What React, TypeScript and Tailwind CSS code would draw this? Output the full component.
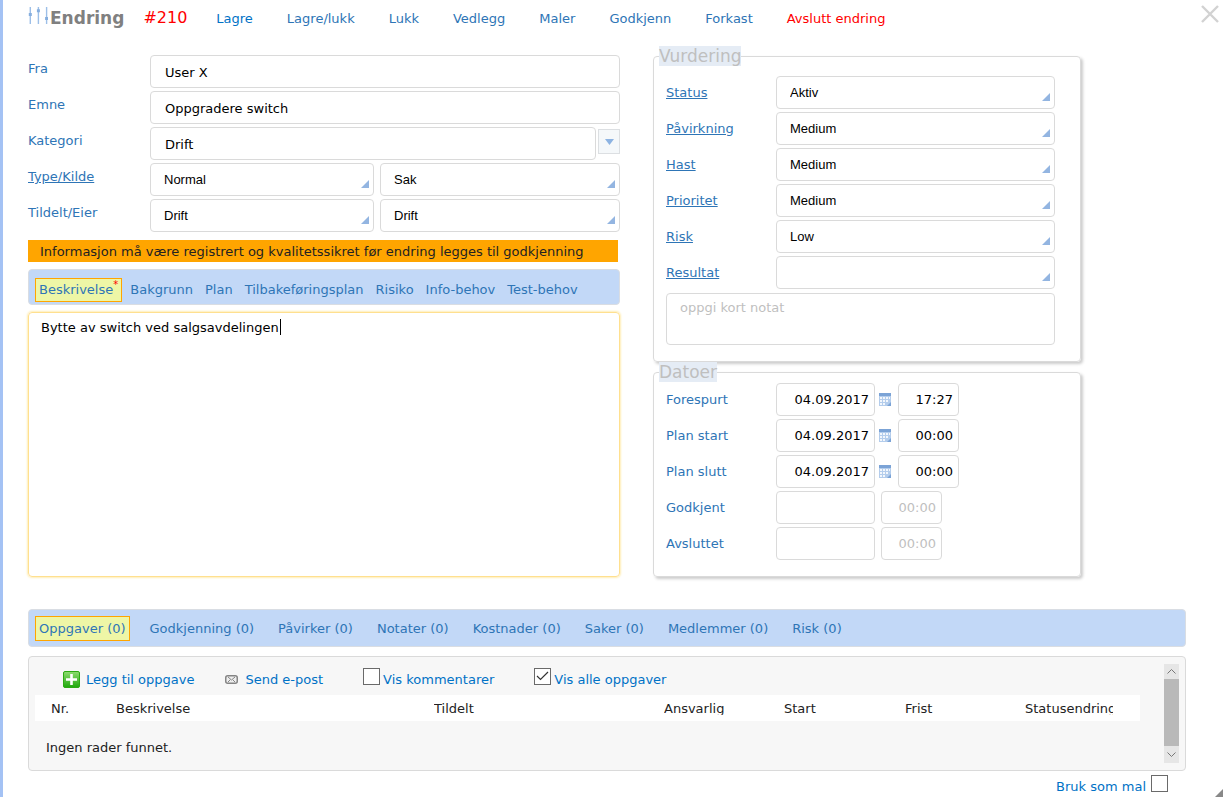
import React from 'react';

const actions = ['Lagre', 'Lagre/lukk', 'Lukk', 'Vedlegg', 'Maler', 'Godkjenn', 'Forkast', 'Avslutt endring'];

const textTabs = ['Beskrivelse', 'Bakgrunn', 'Plan', 'Tilbakeføringsplan', 'Risiko', 'Info-behov', 'Test-behov'];

const relationTabs = ['Oppgaver', 'Godkjenning', 'Påvirker', 'Notater', 'Kostnader', 'Saker', 'Medlemmer', 'Risk'];

const assessments = [
    { id: 'status', label: 'Status', value: 'Aktiv' },
    { id: 'pavirkning', label: 'Påvirkning', value: 'Medium' },
    { id: 'hast', label: 'Hast', value: 'Medium' },
    { id: 'prioritet', label: 'Prioritet', value: 'Medium' },
    { id: 'risk', label: 'Risk', value: 'Low' },
    { id: 'resultat', label: 'Resultat', value: '' },
];

const dates = [
    { id: 'forespurt', label: 'Forespurt', date: '04.09.2017', time: '17:27' },
    { id: 'planstart', label: 'Plan start', date: '04.09.2017', time: '00:00' },
    { id: 'planslutt', label: 'Plan slutt', date: '04.09.2017', time: '00:00' },
    { id: 'godkjent', label: 'Godkjent', date: '', time: '' },
    { id: 'avsluttet', label: 'Avsluttet', date: '', time: '' },
];

const columns = [
    { name: 'Nr.', width: 'w-[65px]' },
    { name: 'Beskrivelse', width: 'w-[318px]' },
    { name: 'Tildelt', width: 'w-[230px]' },
    { name: 'Ansvarlig', width: 'w-[120px]' },
    { name: 'Start', width: 'w-[121px]' },
    { name: 'Frist', width: 'w-[120px]' },
    { name: 'Statusendring', width: 'w-[131px]' },
];

const field = 'h-[33px] rounded-[4px] border border-[#dadada] bg-white text-black outline-none';

const Select = ({ id, value, label }: { id: string; value: string; label?: string }) => (
    <div className="relative min-w-0 w-full">
        <select id={id} aria-label={label} defaultValue={value} className={`${field} block w-full appearance-none pl-[13px] font-['Liberation_Sans',Arial,sans-serif]`}>
            <option value={value}>{value}</option>
        </select>
        <svg className="pointer-events-none absolute right-[5px] bottom-2 size-2" viewBox="0 0 8 8" aria-hidden="true">
            <path d="M8 0v8H0z" fill="#93b5e1" />
        </svg>
    </div>
);

const Checkbox = ({ id, checked = false }: { id: string; checked?: boolean }) => (
    <span className="relative block size-[17px]">
        <input id={id} type="checkbox" defaultChecked={checked} className="peer block size-[17px] appearance-none border border-[#6a6a6a] bg-white" />
        <svg className="pointer-events-none absolute inset-0 hidden size-[17px] peer-checked:block" viewBox="0 0 17 17" fill="none" stroke="#333" strokeWidth="1.2" aria-hidden="true">
            <path d="M3 8l3.5 3.5L14 4" />
        </svg>
    </span>
);

const SlidersIcon = () => (
    <svg className="mt-[7px] h-[18px] w-5 self-start" viewBox="0 0 20 18" fill="none" stroke="#9dbfe8" strokeWidth="1.4" aria-hidden="true">
        <path d="M2.3 0v17M10.4 0v17M18.6 0v17" />
        <path d="M2.3 6v3M10.4 2.3v3M18.6 10v3" stroke="#86aede" strokeWidth="3" />
    </svg>
);

const CalendarIcon = () => (
    <svg className="h-[13px] w-3" viewBox="0 0 12 13" aria-hidden="true">
        <path d="M0 0h12v10l-3 3H0z" fill="#b4cdec" />
        <path d="M0 0h12v3H0z" fill="#7ba3d6" />
        <path d="M1 4h2v2H1zM4 4h2v2H4zM7 4h2v2H7zM10 4h1v2h-1zM1 7h2v2H1zM4 7h2v2H4zM7 7h2v2H7zM1 10h2v2H1zM4 10h2v2H4z" fill="#f3f7fc" />
        <path d="M12 9v4H8z" fill="#7ba3d6" />
    </svg>
);

const PlusIcon = () => (
    <svg className="size-[17px]" viewBox="0 0 17 17" aria-hidden="true">
        <defs>
            <linearGradient id="plus-fill" x1="0" y1="0" x2="0" y2="1">
                <stop offset="0" stopColor="#8fdc70" />
                <stop offset="1" stopColor="#1fa80c" />
            </linearGradient>
        </defs>
        <rect x="0.5" y="0.5" width="16" height="16" rx="1.5" fill="url(#plus-fill)" stroke="#2cab12" />
        <path d="M8.5 3v11M3 8.5h11" stroke="#fff" strokeWidth="2.6" />
    </svg>
);

const MailIcon = () => (
    <svg className="h-[9px] w-[13px]" viewBox="0 0 13 9" fill="none" stroke="#858585" aria-hidden="true">
        <rect x="0.75" y="0.75" width="11.5" height="7.5" rx="2" fill="#eee" strokeWidth="1.5" />
        <path d="M3 2l3.5 3L10 2M3 7l2.3-2.3M10 7L7.7 4.7" />
    </svg>
);

const App: React.FC = () => {
    return (
        <div className="relative min-h-screen border-l-[3px] border-[#a4c2f4] bg-white pr-[37px] pl-[25px] font-['DejaVu_Sans',Verdana,sans-serif] text-[13px] leading-5 text-[#2e75b6]">
            <header className="flex h-9 items-center whitespace-nowrap">
                <SlidersIcon />
                <h1 className="ml-[2px] text-[17px] font-bold text-[#808080]">Endring</h1>
                <span className="ml-[19px] text-base text-[#ff0000]">#210</span>
                <nav className="ml-[29px] flex gap-[34px] pt-[2px]">
                    {actions.map((name) => (
                        <button key={name} type="button" className="first:text-[#0072c6] last:text-[#ff0000]">{name}</button>
                    ))}
                </nav>
            </header>
            <button type="button" aria-label="Lukk vindu" className="absolute top-[5px] right-1">
                <svg className="size-[18px]" viewBox="0 0 18 18" stroke="#d2d2d2" strokeWidth="2.4" aria-hidden="true">
                    <path d="M1 1l16 16M17 1L1 17" />
                </svg>
            </button>

            <main className="pt-[10px]">
                <div className="grid grid-cols-[minmax(0,592fr)_minmax(0,428fr)_minmax(0,72fr)] gap-x-[33px]">
                    <section className="flex flex-col pt-[9px]">
                        <div className="grid grid-cols-[122px_minmax(0,1fr)] gap-y-[3px]">
                            <label htmlFor="fra" className="leading-7">Fra</label>
                            <input id="fra" defaultValue="User X" className={`${field} px-[14px] pt-[2px]`} />
                            <label htmlFor="emne" className="leading-7">Emne</label>
                            <input id="emne" defaultValue="Oppgradere switch" className={`${field} px-[14px] pt-[2px]`} />
                            <label htmlFor="kategori" className="leading-7">Kategori</label>
                            <div className="flex gap-[2px]">
                                <input id="kategori" defaultValue="Drift" className={`${field} min-w-0 flex-1 px-[14px] pt-[2px]`} />
                                <button type="button" aria-label="Velg kategori" className="mt-[2px] flex h-[25px] w-[22px] items-center justify-center border border-[#dcdfe2] bg-[#f5f8fa]">
                                    <svg className="h-[6px] w-[9px]" viewBox="0 0 9 6" aria-hidden="true">
                                        <path d="M0 0h9L4.5 6z" fill="#8db3e2" />
                                    </svg>
                                </button>
                            </div>
                            <label htmlFor="type" className="leading-7 underline">Type/Kilde</label>
                            <div className="grid grid-cols-[minmax(0,224fr)_minmax(0,240fr)] gap-[6px]">
                                <Select id="type" value="Normal" />
                                <Select id="kilde" label="Kilde" value="Sak" />
                            </div>
                            <label htmlFor="tildelt" className="leading-7">Tildelt/Eier</label>
                            <div className="grid grid-cols-[minmax(0,224fr)_minmax(0,240fr)] gap-[6px]">
                                <Select id="tildelt" value="Drift" />
                                <Select id="eier" label="Eier" value="Drift" />
                            </div>
                        </div>

                        <p className="mt-2 mr-[2px] bg-[#ffa500] px-3 pt-px leading-[21px] whitespace-nowrap text-[#222]">
                            Informasjon må være registrert og kvalitetssikret før endring legges til godkjenning
                        </p>

                        <nav className="mt-[7px] flex h-9 items-center gap-1 rounded-[4px] border border-[#d9dde3] bg-[#c2d8f7] pt-[6px] pl-[6px] whitespace-nowrap">
                            {textTabs.map((name, i) => (
                                <button key={name} type="button" className={i === 0 ? 'flex border border-[#ffa500] bg-[#eef6a6] px-[3px] leading-[22px]' : 'px-1 leading-[22px]'}>
                                    {name}
                                    {i === 0 && <span className="text-[10px] leading-3 text-[#ff0000]">*</span>}
                                </button>
                            ))}
                        </nav>

                        <div className="relative mt-[7px] flex flex-1">
                            <textarea aria-label="Beskrivelse" defaultValue="Bytte av switch ved salgsavdelingen" className="w-full resize-none rounded-[4px] border border-[#ffe08f] px-3 pt-[5px] text-black shadow-[0_0_2px_1px_#ffeeb8] outline-none" />
                            <span className="absolute top-[7px] left-[252px] h-4 w-px bg-black" />
                        </div>
                    </section>

                    <div>
                        <fieldset className="rounded-[4px] border border-[#dadada] px-3 pb-4 shadow-[2px_2px_3px_#ccc]">
                            <legend className="-ml-[7px] bg-[#e5ecf5] text-[17px] leading-5 text-[#bfbfbf]">Vurdering</legend>
                            <div className="mr-[13px] grid grid-cols-[110px_minmax(0,1fr)] items-center gap-y-[3px] pt-[10px]">
                                {assessments.map((row) => (
                                    <React.Fragment key={row.id}>
                                        <label htmlFor={row.id} className="underline">{row.label}</label>
                                        <Select id={row.id} value={row.value} />
                                    </React.Fragment>
                                ))}
                                <textarea aria-label="Notat" placeholder="oppgi kort notat" className="col-span-2 mt-px h-[52px] w-full resize-none rounded-[4px] border border-[#dadada] px-[13px] pt-1 outline-none placeholder:text-[#bfbfbf]" />
                            </div>
                        </fieldset>

                        <fieldset className="rounded-[4px] border border-[#dadada] px-3 pb-4 shadow-[2px_2px_3px_#ccc]">
                            <legend className="-ml-[7px] bg-[#e5ecf5] text-[17px] leading-5 text-[#bfbfbf]">Datoer</legend>
                            <div className="flex flex-col gap-[3px] pt-px">
                                {dates.map((row) => (
                                    <div key={row.id} className="flex items-center">
                                        <label htmlFor={row.id} className="w-[110px]">{row.label}</label>
                                        <input id={row.id} defaultValue={row.date} className={`${field} w-[99px] pr-[5px] text-right`} />
                                        {row.date && (
                                            <button type="button" aria-label={`Velg dato, ${row.label}`} className="ml-1 mr-[1px]">
                                                <CalendarIcon />
                                            </button>
                                        )}
                                        <input aria-label={`${row.label} klokkeslett`} defaultValue={row.time} placeholder="00:00" className={`${field} ml-[6px] w-[61px] pr-[5px] text-right placeholder:text-[#bfbfbf]`} />
                                    </div>
                                ))}
                            </div>
                        </fieldset>
                    </div>
                </div>

                <nav className="mt-8 flex h-[38px] items-center gap-4 rounded-[4px] border border-[#d9dde3] bg-[#c2d8f7] pt-px pl-[6px] whitespace-nowrap">
                    {relationTabs.map((name, i) => (
                        <button key={name} type="button" className={i === 0 ? 'border border-[#ffa500] bg-[#eef6a6] px-[3px] leading-[23px]' : 'px-1 leading-[23px]'}>
                            {name} (0)
                        </button>
                    ))}
                </nav>

                <section className="mt-[9px] flex rounded-[4px] border border-[#dadada] bg-[#f7f7f7] py-[7px] px-[6px]">
                    <div className="mr-6 min-w-0 flex-1">
                        <div className="flex h-[31px] items-center pl-7 whitespace-nowrap text-[#0072c6]">
                            <button type="button" className="flex items-center gap-[6px]"><PlusIcon />Legg til oppgave</button>
                            <button type="button" className="ml-[31px] flex items-center gap-[7px]"><MailIcon />Send e-post</button>
                            <div className="ml-10 flex items-start gap-[3px]">
                                <Checkbox id="kommentarer" />
                                <label htmlFor="kommentarer" className="pt-[3px] pb-1 leading-[17px]">Vis kommentarer</label>
                            </div>
                            <div className="ml-10 flex items-start gap-[3px]">
                                <Checkbox id="alle" checked />
                                <label htmlFor="alle" className="pt-[3px] pb-1 leading-[17px]">Vis alle oppgaver</label>
                            </div>
                        </div>
                        <table className="w-full table-fixed text-left text-[#222]">
                            <thead className="bg-white">
                                <tr className="h-[26px]">
                                    {columns.map((col) => (
                                        <th key={col.name} className={`${col.width} pl-4 font-normal last:pr-[27px]`}>
                                            <div className="overflow-hidden leading-[13px] whitespace-nowrap">{col.name}</div>
                                        </th>
                                    ))}
                                </tr>
                            </thead>
                            <tbody>
                                <tr>
                                    <td colSpan={7} className="pt-[17px] pl-[11px]">Ingen rader funnet.</td>
                                </tr>
                            </tbody>
                        </table>
                    </div>
                    <div className="flex h-[99px] w-[15px] flex-col">
                        <button type="button" aria-label="Rull opp" className="flex h-[15px] items-center justify-center bg-[#e6e6e6]">
                            <svg className="h-[5px] w-[9px]" viewBox="0 0 9 5" fill="none" stroke="#777" aria-hidden="true"><path d="M0.5 4.5l4-4 4 4" /></svg>
                        </button>
                        <div className="flex-1 bg-[#b9b9b9]" />
                        <button type="button" aria-label="Rull ned" className="flex h-[17px] items-center justify-center bg-[#e6e6e6]">
                            <svg className="h-[5px] w-[9px]" viewBox="0 0 9 5" fill="none" stroke="#777" aria-hidden="true"><path d="M0.5 0.5l4 4 4-4" /></svg>
                        </button>
                    </div>
                </section>

                <footer className="mr-[18px] flex items-start justify-end gap-[5px] pt-1 text-[#0072c6]">
                    <label htmlFor="mal" className="pt-[2px]">Bruk som mal</label>
                    <Checkbox id="mal" />
                </footer>
            </main>

            <svg className="absolute right-0 bottom-0 size-2" viewBox="0 0 8 8" aria-hidden="true">
                <path d="M8 0v8H0z" fill="#888" />
            </svg>
        </div>
    );
};

export default App;
